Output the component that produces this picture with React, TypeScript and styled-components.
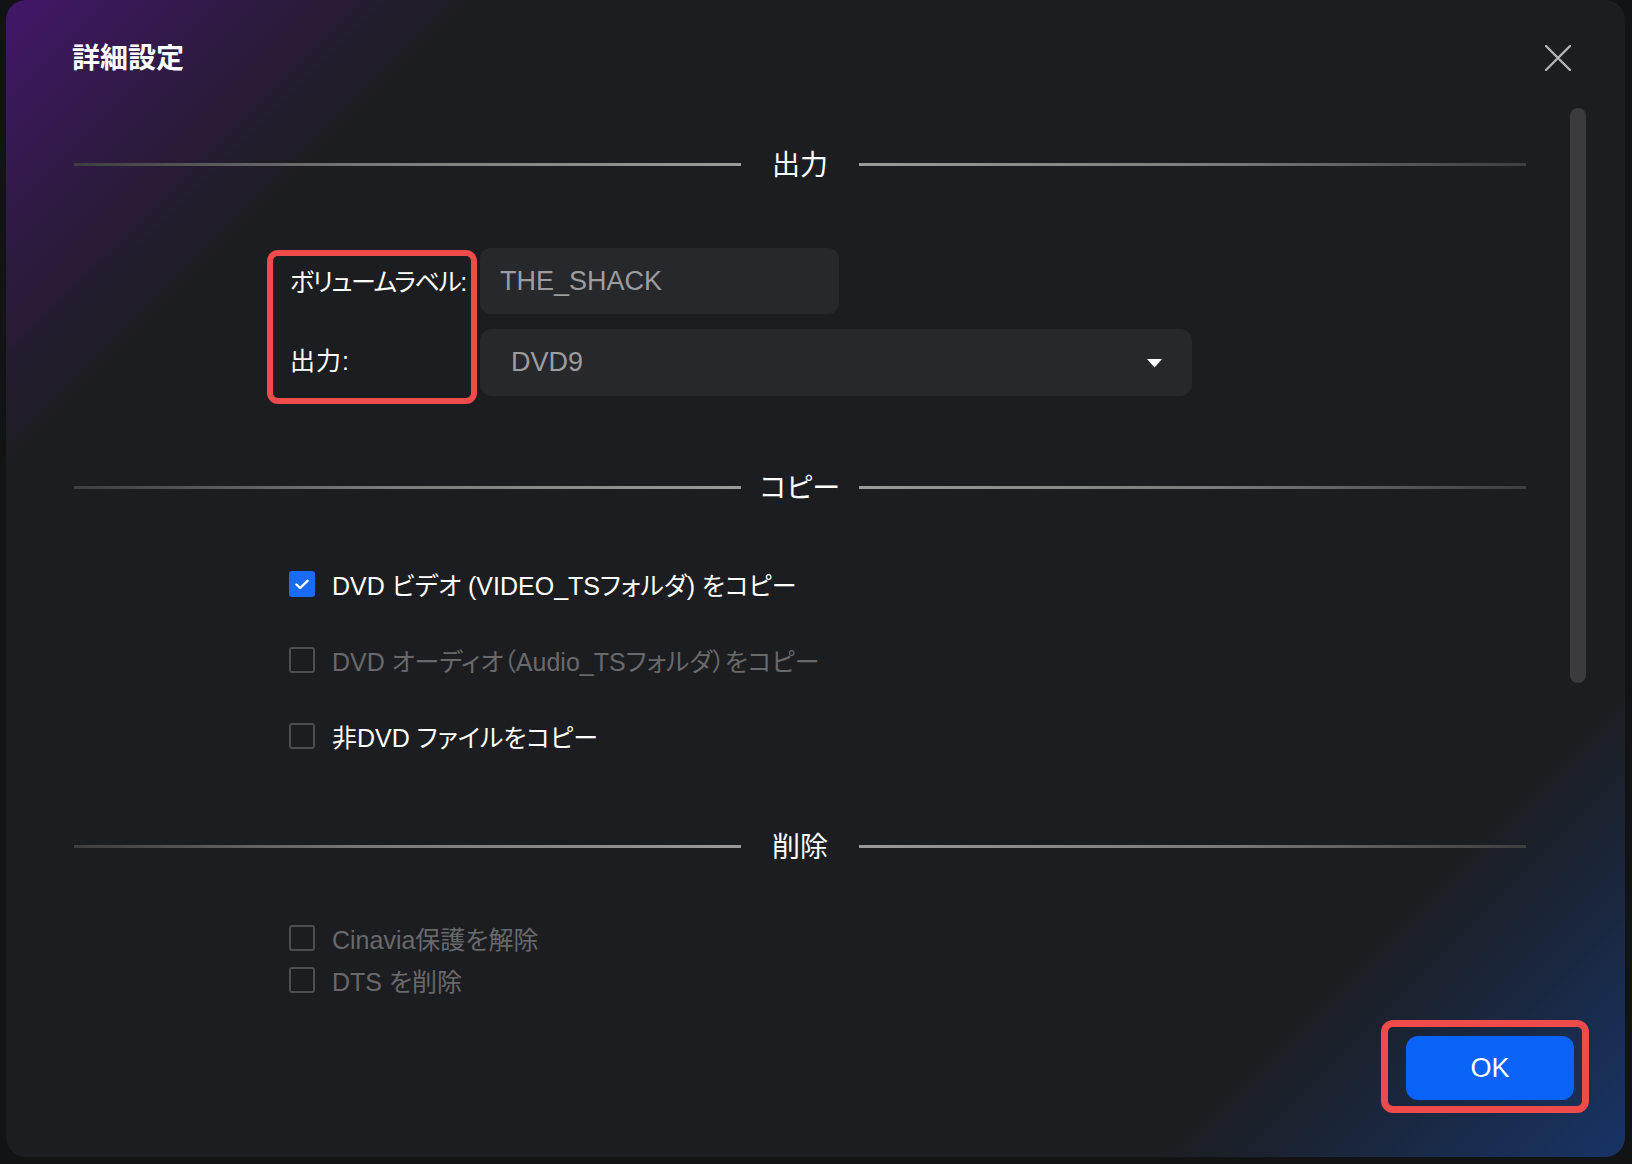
import React from 'react';
import styled, { createGlobalStyle } from 'styled-components';

const GlobalStyle = createGlobalStyle`
  html, body {
    margin: 0;
    padding: 0;
    background: #121314;
  }
  body {
    font-family: "Liberation Sans", "Noto Sans CJK JP", sans-serif;
    font-feature-settings: "palt" 1;
    color: #fff;
  }
`;

const Page = styled.div`
  width: 1632px;
  height: 1164px;
  overflow: hidden;
  padding-left: 6px;
  box-sizing: border-box;
`;

const Dialog = styled.div`
  width: 1619px;
  height: 1157px;
  border-radius: 20px;
  overflow: hidden;
  display: flex;
  flex-direction: column;
  background:
    linear-gradient(135deg, rgba(70, 22, 112, 0.9) 0%, rgba(70, 22, 112, 0) 17%),
    linear-gradient(315deg, rgba(22, 58, 120, 0.8) 0%, rgba(22, 58, 120, 0) 17%),
    #1c1d20;
`;

const Header = styled.header`
  height: 100px;
  flex-shrink: 0;
  display: flex;
  align-items: flex-start;
  justify-content: space-between;
  padding: 40px 54px 0 66px;
  box-sizing: border-box;
`;

const Title = styled.h1`
  margin: 0;
  font-size: 28px;
  line-height: 38px;
  font-weight: 700;
  color: #fff;
`;

const CloseButton = styled.button`
  width: 26px;
  height: 26px;
  margin-top: 5px;
  padding: 0;
  border: none;
  background: none;
  display: flex;
`;

const Body = styled.div`
  height: 898px;
  flex-shrink: 0;
  display: flex;
  overflow: hidden;
`;

const ScrollContent = styled.div`
  flex: 1;
  padding-left: 68px;
  overflow: hidden;
`;

const Track = styled.div`
  width: 16px;
  margin: 8px 39px 0 44px;
`;

const Thumb = styled.div`
  height: 575px;
  border-radius: 8px;
  background: #3b3b3e;
`;

const SectionHead = styled.div<{ $mt: number }>`
  display: flex;
  align-items: center;
  height: 40px;
  margin-top: ${p => p.$mt}px;
`;

const Rule = styled.div<{ $side: 'left' | 'right' }>`
  flex: 1;
  height: 3px;
  margin-top: -4px;
  background: linear-gradient(${p => (p.$side === 'left' ? '90deg' : '270deg')}, #3e3e40, #7a7a7c 45%, #9a9a9a);
`;

const SectionTitle = styled.h2`
  width: 118px;
  margin: 0;
  text-align: center;
  font-size: 28px;
  line-height: 40px;
  font-weight: 400;
  color: #fff;
`;

const Form = styled.div`
  display: flex;
  align-items: flex-start;
  margin-top: 62px;
  padding-left: 193px;
`;

const LabelBox = styled.div`
  width: 210px;
  height: 154px;
  margin-top: 2px;
  box-sizing: border-box;
  border: 6px solid #ef4b4b;
  border-radius: 11px;
  padding-left: 17px;
`;

const FieldLabel = styled.div<{ $mt?: number; $tight?: boolean }>`
  height: 52px;
  line-height: 52px;
  margin-top: ${p => p.$mt ?? 0}px;
  font-size: 25px;
  letter-spacing: ${p => (p.$tight ? '-1.5px' : '1px')};
  color: #fff;
  white-space: nowrap;
`;

const Fields = styled.div`
  display: flex;
  flex-direction: column;
  gap: 15px;
  margin-left: 3px;
`;

const TextInput = styled.div`
  width: 359px;
  height: 66px;
  box-sizing: border-box;
  border-radius: 11px;
  background: #27282b;
  padding-left: 20px;
  display: flex;
  align-items: center;
  font-size: 27px;
  color: #9d9d9f;
`;

const Select = styled.div`
  width: 712px;
  height: 67px;
  box-sizing: border-box;
  border-radius: 12px;
  background: #27282b;
  padding: 0 29px 0 31px;
  display: flex;
  align-items: center;
  justify-content: space-between;
  font-size: 27px;
  color: #9d9d9f;
`;

const CheckList = styled.div<{ $mt: number; $gap: number }>`
  display: flex;
  flex-direction: column;
  gap: ${p => p.$gap}px;
  margin-top: ${p => p.$mt}px;
  padding-left: 215px;
`;

const CheckRow = styled.label<{ $dim?: boolean }>`
  display: flex;
  align-items: center;
  gap: 17px;
  height: 40px;
  font-size: 25px;
  white-space: nowrap;
  color: ${p => (p.$dim ? '#69696c' : '#fff')};
`;

const Box = styled.span<{ $checked?: boolean }>`
  width: 26px;
  height: 26px;
  flex-shrink: 0;
  box-sizing: border-box;
  border-radius: 3px;
  border: 2px solid ${p => (p.$checked ? '#1a6af5' : '#4d4e51')};
  background: ${p => (p.$checked ? '#1a6af5' : 'transparent')};
  display: flex;
  align-items: center;
  justify-content: center;
`;

const Footer = styled.footer`
  flex: 1;
  display: flex;
  justify-content: flex-end;
  align-items: flex-start;
  padding: 22px 36px 0 0;
`;

const Highlight = styled.div`
  border: 7px solid #ef4b4b;
  border-radius: 12px;
  padding: 9px 8px 6px 18px;
`;

const OkButton = styled.button`
  width: 168px;
  height: 64px;
  border: none;
  border-radius: 12px;
  background: #0a63f7;
  color: #fff;
  font-family: inherit;
  font-size: 27px;
`;

type CheckProps = { label: string; checked?: boolean; dim?: boolean };

const Check: React.FC<CheckProps> = ({ label, checked, dim }) => (
  <CheckRow $dim={dim}>
    <Box $checked={checked}>
      {checked && (
        <svg width="14" height="11" viewBox="0 0 14 11">
          <path d="M1.5 5.5 L5.2 9 L12.5 1.8" fill="none" stroke="#fff" strokeWidth="2.4" strokeLinecap="round" strokeLinejoin="round" />
        </svg>
      )}
    </Box>
    {label}
  </CheckRow>
);

const Section: React.FC<{ title: string; mt: number }> = ({ title, mt }) => (
  <SectionHead $mt={mt}>
    <Rule $side="left" />
    <SectionTitle>{title}</SectionTitle>
    <Rule $side="right" />
  </SectionHead>
);

const App: React.FC = () => {
  return (
    <Page>
      <GlobalStyle />
      <Dialog>
        <Header>
          <Title>詳細設定</Title>
          <CloseButton aria-label="close">
            <svg width="26" height="26" viewBox="0 0 26 26">
              <path d="M1 1 L25 25 M25 1 L1 25" stroke="#b4b4b6" strokeWidth="2.4" strokeLinecap="round" />
            </svg>
          </CloseButton>
        </Header>
        <Body>
          <ScrollContent>
            <Section title="出力" mt={46} />
            <Form>
              <LabelBox>
                <FieldLabel $tight>ボリュームラベル:</FieldLabel>
                <FieldLabel $mt={27}>出力:</FieldLabel>
              </LabelBox>
              <Fields>
                <TextInput>THE_SHACK</TextInput>
                <Select>
                  DVD9
                  <svg width="17" height="10" viewBox="0 0 17 10">
                    <path d="M1 1 H16 L8.5 9.5 Z" fill="#fff" />
                  </svg>
                </Select>
              </Fields>
            </Form>

            <Section title="コピー" mt={65} />
            <CheckList $mt={55} $gap={36}>
              <Check checked label="DVD ビデオ (VIDEO_TSフォルダ) をコピー" />
              <Check dim label="DVD オーディオ（Audio_TSフォルダ）をコピー" />
              <Check label="非DVD ファイルをコピー" />
            </CheckList>

            <Section title="削除" mt={72} />
            <CheckList $mt={50} $gap={2}>
              <Check dim label="Cinavia保護を解除" />
              <Check dim label="DTS を削除" />
            </CheckList>
          </ScrollContent>
          <Track>
            <Thumb />
          </Track>
        </Body>
        <Footer>
          <Highlight>
            <OkButton>OK</OkButton>
          </Highlight>
        </Footer>
      </Dialog>
    </Page>
  );
};

export default App;
